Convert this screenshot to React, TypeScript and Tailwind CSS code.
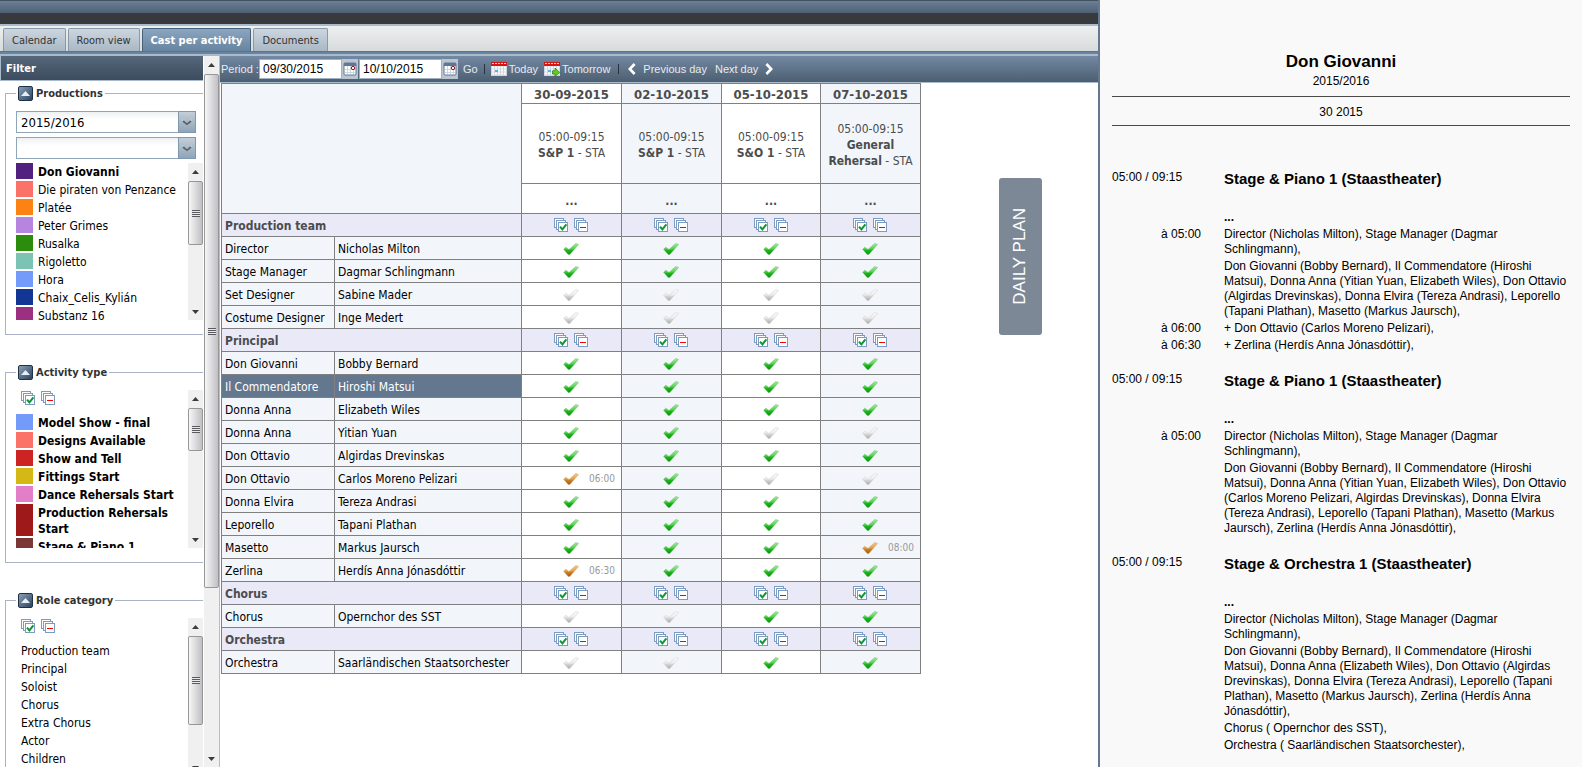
import { ReactNode } from "react";
import { clsx } from "clsx";

type Mark = "on" | "off" | "part";
type Cell = { mark: Mark; time?: string };
type Person = { role: string; name: string; cells: Cell[]; active?: boolean };
type Group = { title: string; people: Person[] };

const on: Cell = { mark: "on" };
const off: Cell = { mark: "off" };
const late = (time: string): Cell => ({ mark: "part", time });

const activities = [
  { date: "30-09-2015", hours: "05:00-09:15", name: "S&P 1", place: "STA" },
  { date: "02-10-2015", hours: "05:00-09:15", name: "S&P 1", place: "STA" },
  { date: "05-10-2015", hours: "05:00-09:15", name: "S&O 1", place: "STA" },
  {
    date: "07-10-2015",
    hours: "05:00-09:15",
    name: "General Rehersal",
    place: "STA",
  },
];

const groups: Group[] = [
  {
    title: "Production team",
    people: [
      { role: "Director", name: "Nicholas Milton", cells: [on, on, on, on] },
      { role: "Stage Manager", name: "Dagmar Schlingmann", cells: [on, on, on, on] },
      { role: "Set Designer", name: "Sabine Mader", cells: [off, off, off, off] },
      { role: "Costume Designer", name: "Inge Medert", cells: [off, off, off, off] },
    ],
  },
  {
    title: "Principal",
    people: [
      { role: "Don Giovanni", name: "Bobby Bernard", cells: [on, on, on, on] },
      { role: "Il Commendatore", name: "Hiroshi Matsui", cells: [on, on, on, on], active: true },
      { role: "Donna Anna", name: "Elizabeth Wiles", cells: [on, on, on, on] },
      { role: "Donna Anna", name: "Yitian Yuan", cells: [on, on, off, off] },
      { role: "Don Ottavio", name: "Algirdas Drevinskas", cells: [on, on, on, on] },
      { role: "Don Ottavio", name: "Carlos Moreno Pelizari", cells: [late("06:00"), on, off, off] },
      { role: "Donna Elvira", name: "Tereza Andrasi", cells: [on, on, on, on] },
      { role: "Leporello", name: "Tapani Plathan", cells: [on, on, on, on] },
      { role: "Masetto", name: "Markus Jaursch", cells: [on, on, on, late("08:00")] },
      { role: "Zerlina", name: "Herdís Anna Jónasdóttir", cells: [late("06:30"), on, on, on] },
    ],
  },
  {
    title: "Chorus",
    people: [{ role: "Chorus", name: "Opernchor des SST", cells: [off, off, on, on] }],
  },
  {
    title: "Orchestra",
    people: [
      { role: "Orchestra", name: "Saarländischen Staatsorchester", cells: [off, off, on, on] },
    ],
  },
];

const productions = [
  { name: "Don Giovanni", color: "bg-[#52207f]", bold: true },
  { name: "Die piraten von Penzance", color: "bg-[#fb7268]" },
  { name: "Platée", color: "bg-[#fb8213]" },
  { name: "Peter Grimes", color: "bg-[#b585e0]" },
  { name: "Rusalka", color: "bg-[#2c8d0c]" },
  { name: "Rigoletto", color: "bg-[#7cc3b4]" },
  { name: "Hora", color: "bg-[#759bfa]" },
  { name: "Chaix_Celis_Kylián", color: "bg-[#133593]" },
  { name: "Substanz 16", color: "bg-[#9c2f7f]" },
];

const activityTypes = [
  { name: "Model Show - final", color: "bg-[#759bfa]", bold: true },
  { name: "Designs Available", color: "bg-[#fb7268]", bold: true },
  { name: "Show and Tell", color: "bg-[#cd2323]", bold: true },
  { name: "Fittings Start", color: "bg-[#d5b816]", bold: true },
  { name: "Dance Rehersals Start", color: "bg-[#e37fc9]", bold: true },
  { name: "Production Rehersals Start", color: "bg-[#9e1919]", bold: true },
  { name: "Stage & Piano 1", color: "bg-[#7b3636]", bold: true },
];

const roles = [
  "Production team",
  "Principal",
  "Soloist",
  "Chorus",
  "Extra Chorus",
  "Actor",
  "Children",
];

const plan = [
  {
    hours: "05:00 / 09:15",
    title: "Stage & Piano 1 (Staastheater)",
    rows: [
      { at: "à 05:00", text: "Director (Nicholas Milton), Stage Manager (Dagmar Schlingmann)," },
      {
        text: "Don Giovanni (Bobby Bernard), Il Commendatore (Hiroshi Matsui), Donna Anna (Yitian Yuan, Elizabeth Wiles), Don Ottavio (Algirdas Drevinskas), Donna Elvira (Tereza Andrasi), Leporello (Tapani Plathan), Masetto (Markus Jaursch),",
      },
      { at: "à 06:00", text: "+ Don Ottavio (Carlos Moreno Pelizari)," },
      { at: "à 06:30", text: "+ Zerlina (Herdís Anna Jónasdóttir)," },
    ],
  },
  {
    hours: "05:00 / 09:15",
    title: "Stage & Piano 1 (Staastheater)",
    rows: [
      { at: "à 05:00", text: "Director (Nicholas Milton), Stage Manager (Dagmar Schlingmann)," },
      {
        text: "Don Giovanni (Bobby Bernard), Il Commendatore (Hiroshi Matsui), Donna Anna (Yitian Yuan, Elizabeth Wiles), Don Ottavio (Carlos Moreno Pelizari, Algirdas Drevinskas), Donna Elvira (Tereza Andrasi), Leporello (Tapani Plathan), Masetto (Markus Jaursch), Zerlina (Herdís Anna Jónasdóttir),",
      },
    ],
  },
  {
    hours: "05:00 / 09:15",
    title: "Stage & Orchestra 1 (Staastheater)",
    rows: [
      { text: "Director (Nicholas Milton), Stage Manager (Dagmar Schlingmann)," },
      {
        text: "Don Giovanni (Bobby Bernard), Il Commendatore (Hiroshi Matsui), Donna Anna (Elizabeth Wiles), Don Ottavio (Algirdas Drevinskas), Donna Elvira (Tereza Andrasi), Leporello (Tapani Plathan), Masetto (Markus Jaursch), Zerlina (Herdís Anna Jónasdóttir),",
      },
      { text: "Chorus ( Opernchor des SST)," },
      { text: "Orchestra ( Saarländischen Staatsorchester)," },
    ],
  },
];

const IconDefs = () => (
  <svg width="0" height="0" className="absolute" aria-hidden="true">
    <defs>
      <linearGradient id="mark-on" x1="0" y1="0" x2="0" y2="1">
        <stop offset="0" stopColor="#a9e8a2" />
        <stop offset="0.5" stopColor="#4fd04c" />
        <stop offset="0.6" stopColor="#1fb51f" />
        <stop offset="1" stopColor="#0c930c" />
      </linearGradient>
      <linearGradient id="mark-part" x1="0" y1="0" x2="0" y2="1">
        <stop offset="0" stopColor="#edcb94" />
        <stop offset="0.5" stopColor="#e3a14b" />
        <stop offset="0.6" stopColor="#cf8226" />
        <stop offset="1" stopColor="#9c5a0c" />
      </linearGradient>
      <linearGradient id="mark-off" x1="0" y1="0" x2="0" y2="1">
        <stop offset="0" stopColor="#fafafa" />
        <stop offset="0.5" stopColor="#ececec" />
        <stop offset="0.6" stopColor="#d6d6d6" />
        <stop offset="1" stopColor="#adadad" />
      </linearGradient>
    </defs>
  </svg>
);

const markStyles = {
  on: { fill: "url(#mark-on)", stroke: "#58b957" },
  part: { fill: "url(#mark-part)", stroke: "#c9975a" },
  off: { fill: "url(#mark-off)", stroke: "#c6c6c6" },
};

const MarkIcon = ({ mark }: { mark: Mark }) => (
  <svg width="16" height="12" viewBox="0 0 16 12">
    <path
      d="M0.6 6.3 L2.8 4.2 L6 6.4 L12.8 0.4 L15.6 1.4 L6.8 11.6 L5.2 11.6 Z"
      fill={markStyles[mark].fill}
      stroke={markStyles[mark].stroke}
      strokeWidth="0.4"
    />
  </svg>
);

const StackIcon = ({ kind }: { kind: "all" | "none" }) => (
  <svg width="14" height="14" viewBox="0 0 14 14">
    <g fill="#fff" stroke="#7b9cc0">
      <rect x="0.5" y="0.5" width="9" height="9" />
      <rect x="2.5" y="2.5" width="9" height="9" />
      <rect x="4.5" y="4.5" width="9" height="9" />
    </g>
    {kind === "all" ? (
      <path d="M6 8.6 L8.4 11.4 L12.4 6.4" fill="none" stroke="#0f9636" strokeWidth="2" />
    ) : (
      <rect x="6" y="9" width="6" height="1" fill="#f00" shapeRendering="crispEdges" />
    )}
  </svg>
);

const StackButtons = () => (
  <div className="flex gap-1.5">
    <button aria-label="Select all">
      <StackIcon kind="all" />
    </button>
    <button aria-label="Select none">
      <StackIcon kind="none" />
    </button>
  </div>
);

const PickerIcon = () => (
  <svg width="14" height="14" viewBox="0 0 14 14">
    <rect x="1" y="1" width="12" height="12" rx="1" fill="#fff" stroke="#5f7794" />
    <rect x="1" y="1" width="12" height="3" fill="#5f7794" />
    <path d="M2 7.5 H12 M2 10.5 H12 M4.5 4 V12 M7.5 4 V12 M10.5 4 V12" stroke="#cdd6df" />
    <circle cx="10" cy="6" r="1.7" fill="#fff" stroke="#8d1626" />
  </svg>
);

const DayIcon = ({ next }: { next?: boolean }) => (
  <svg width="16" height="15" viewBox="0 0 16 15">
    <rect x="0" y="3" width="16" height="11" fill="#cfd6dc" />
    <path
      d="M1 5.5 H15 M1 8.5 H15 M1 11.5 H15"
      stroke="#fff"
      strokeWidth="2"
      strokeDasharray="2 1"
    />
    <rect x="4" y="8" width="3" height="2" fill="#57b4e8" />
    <rect x="0" y="0" width="16" height="4" fill="#d31616" />
    <path d="M1 1.5 H15" stroke="#f7caca" strokeDasharray="2 1" />
    {next && (
      <path
        d="M8.5 8.8 H11 V6 L15.6 10.4 L11 14.6 V12 H8.5 Z"
        fill="#5fd01b"
        stroke="#257a0a"
        strokeWidth="0.7"
      />
    )}
  </svg>
);

const Chevron = ({ right }: { right?: boolean }) => (
  <svg width="8" height="12" viewBox="0 0 8 12">
    <path
      d={right ? "M1.4 1 L6.2 6 L1.4 11" : "M6.6 1 L1.8 6 L6.6 11"}
      fill="none"
      stroke="#fff"
      strokeWidth="2.6"
    />
  </svg>
);

const ScrollRail = ({ thumb, className }: { thumb: string; className?: string }) => (
  <div
    aria-hidden="true"
    className={clsx("flex w-[15px] shrink-0 flex-col items-center bg-[#f0f0f0]", className)}
  >
    <div className="flex h-[18px] shrink-0 items-center">
      <svg width="7" height="4" viewBox="0 0 7 4">
        <path d="M0 4 L3.5 0 L7 4 Z" fill="#3c3c3c" />
      </svg>
    </div>
    <div
      className={clsx(
        "flex w-full shrink-0 flex-col items-center justify-center rounded-xs border border-[#979797] bg-linear-to-r from-[#f6f6f6] via-[#dcdcdf] to-[#bfbfc4]",
        thumb
      )}
    >
      <svg width="8" height="9" viewBox="0 0 8 9">
        <path d="M0 1.5 H8 M0 3.5 H8 M0 5.5 H8 M0 7.5 H8" stroke="#5b5b5f" />
        <path d="M0 2.5 H8 M0 4.5 H8 M0 6.5 H8" stroke="#e8e8ea" />
      </svg>
    </div>
    <div className="mt-auto flex h-4 shrink-0 items-center">
      <svg width="7" height="4" viewBox="0 0 7 4">
        <path d="M0 0 L3.5 4 L7 0 Z" fill="#3c3c3c" />
      </svg>
    </div>
  </div>
);

const FilterBox = ({
  title,
  className,
  children,
}: {
  title: string;
  className: string;
  children: ReactNode;
}) => (
  <fieldset
    className={clsx("ml-[5px] min-w-0 shrink-0 border border-r-0 border-[#abb1c6] pl-2.5", className)}
  >
    <legend className="flex h-4 items-center gap-[3px] px-0.5 text-[11px] font-bold text-[#333]">
      <button
        aria-label={`Collapse ${title}`}
        className="flex size-[15px] items-center justify-center rounded-xs border border-[#1d3148] bg-linear-to-br from-[#8ba0b5] to-[#2c4560]"
      >
        <svg width="9" height="5" viewBox="0 0 9 5">
          <path d="M0 5 L4.5 0 L9 5 Z" fill="#e8eef4" />
        </svg>
      </button>
      <span className="pt-0.5">{title}</span>
    </legend>
    {children}
  </fieldset>
);

const ColorList = ({
  items,
}: {
  items: { name: string; color: string; bold?: boolean }[];
}) => (
  <ul className="flex flex-col gap-0.5">
    {items.map((item) => (
      <li key={item.name} className="flex shrink-0 gap-[5px] text-black">
        <span className={clsx("w-[17px] shrink-0", item.color)} />
        <span className={clsx("-mb-px pt-px leading-4", item.bold && "font-bold")}>
          {item.name}
        </span>
      </li>
    ))}
  </ul>
);

const Dropdown = ({ label, value }: { label: string; value: string }) => (
  <div className="relative h-[22px] w-[180px]">
    <select
      aria-label={label}
      defaultValue={value}
      className="h-full w-full appearance-none border border-[#8fa6ba] bg-linear-to-b from-[#eef1f2] to-white to-40% pt-0.5 pl-1 text-[13px] text-black"
    >
      <option value={value}>{value}</option>
    </select>
    <span className="pointer-events-none absolute inset-y-0 right-0 flex w-[18px] items-center justify-center border border-[#8098ad] bg-linear-to-b from-[#c3ced8] to-[#8fa5b8]">
      <svg width="10" height="7" viewBox="0 0 10 7">
        <path d="M0.5 1 L5 4.6 L9.5 1" fill="none" stroke="#f4f6f8" />
        <path d="M1 2 L5 5.2 L9 2" fill="none" stroke="#5a6068" strokeWidth="1.8" />
      </svg>
    </span>
  </div>
);

const Sidebar = () => (
  <aside className="flex w-[220px] shrink-0 overflow-hidden border-r border-[#b0bfcd] bg-white">
    <div className="flex w-[203px] shrink-0 flex-col">
      <h2 className="mb-1 flex h-[25px] shrink-0 items-center border-b border-l border-[#a9bacb] bg-linear-to-b from-[#55677a] to-[#3d4c5f] pt-0.5 pl-[5px] text-[11px] font-bold text-white">
        Filter
      </h2>
      <div className="flex flex-col gap-[29px]">
        <FilterBox title="Productions" className="h-[250px]">
          <div className="mt-2.5 flex flex-col gap-1">
            <Dropdown label="Season" value="2015/2016" />
            <Dropdown label="Production" value="" />
          </div>
          <div className="mt-1 flex h-[157px] justify-between overflow-hidden">
            <ColorList items={productions} />
            <ScrollRail thumb="h-16" />
          </div>
        </FilterBox>
        <FilterBox title="Activity type" className="h-[199px]">
          <div className="mt-2.5 flex h-[158px] justify-between overflow-hidden">
            <div>
              <div className="mt-px mb-[9px] pl-[5px]">
                <StackButtons />
              </div>
              <ColorList items={activityTypes} />
            </div>
            <ScrollRail thumb="h-[43px]" />
          </div>
        </FilterBox>
        <FilterBox title="Role category" className="h-[199px]">
          <div className="mt-2.5 flex h-[158px] justify-between overflow-hidden">
            <div className="pt-px pl-[5px]">
              <StackButtons />
              <ul className="mt-[9px] leading-[18px] text-black">
                {roles.map((role) => (
                  <li key={role}>{role}</li>
                ))}
              </ul>
            </div>
            <ScrollRail thumb="h-[89px]" />
          </div>
        </FilterBox>
      </div>
    </div>
    <ScrollRail thumb="h-[514px]" className="ml-px" />
  </aside>
);

const tabs = ["Calendar", "Room view", "Cast per activity", "Documents"];

const TabBar = () => (
  <nav className="flex h-[26px] shrink-0 items-end gap-0.5 border-b border-[#5b748b] bg-linear-to-b from-[#eef0f0] to-[#d7dbdb] pl-[3px] text-[11px]">
    {tabs.map((tab) => (
      <button
        key={tab}
        className={clsx(
          "h-[23px] rounded-t-xs border border-b-0 px-2 pt-0.5",
          tab === "Cast per activity"
            ? "border-[#46617c] bg-linear-to-b from-[#8ba5c0] to-[#6785a0] font-bold text-white"
            : "border-[#8999a8] bg-linear-to-b from-[#ccd6e0] to-[#aab8c4] text-[#333]"
        )}
      >
        {tab}
      </button>
    ))}
  </nav>
);

const DateField = ({ label, value }: { label: string; value: string }) => (
  <div className="flex h-5">
    <input
      type="text"
      aria-label={label}
      defaultValue={value}
      className="w-[83px] border border-[#9fb0c0] bg-white pl-[3px] text-xs text-black"
    />
    <button
      aria-label={`Pick ${label}`}
      className="flex w-4 items-center justify-center bg-[#b9c6d2]"
    >
      <PickerIcon />
    </button>
  </div>
);

const Toolbar = () => (
  <div className="flex h-[27px] shrink-0 items-center border-b border-[#a9bacb] bg-linear-to-b from-[#7389a3] to-[#4c5f71] pl-px font-['Liberation_Sans',sans-serif] text-[11px] whitespace-nowrap text-[#e6ebf0]">
    <span className="w-[38px]">Period :</span>
    <div className="flex gap-px">
      <DateField label="start date" value="09/30/2015" />
      <DateField label="end date" value="10/10/2015" />
    </div>
    <button className="ml-[5px]">Go</button>
    <span className="ml-1.5 h-2.5 w-px bg-[#28323c]" />
    <button className="ml-1.5 flex items-center gap-0.5">
      <DayIcon />
      Today
    </button>
    <button className="ml-1.5 flex items-center gap-0.5">
      <DayIcon next />
      Tomorrow
    </button>
    <span className="ml-2 h-2.5 w-px bg-[#28323c]" />
    <button className="ml-[9px] flex items-center gap-[7px]">
      <Chevron />
      Previous day
    </button>
    <button className="ml-2 flex items-center gap-[7px]">
      Next day
      <Chevron right />
    </button>
  </div>
);

const CastTable = () => (
  <table className="w-[700px] shrink-0 table-fixed border-collapse text-black [&_td]:border [&_td]:border-[#808080] [&_th]:border [&_th]:border-[#808080]">
    <colgroup>
      <col className="w-[113px]" />
      <col className="w-[187px]" />
      <col className="w-[100px]" />
      <col className="w-[100px]" />
      <col className="w-[99px]" />
      <col className="w-[100px]" />
    </colgroup>
    <thead className="text-center text-[#4c4c4c]">
      <tr className="h-5">
        <td colSpan={2} rowSpan={3} className="bg-[#f2f6fb]" />
        {activities.map((a) => (
          <th
            key={a.date}
            className="p-0 pt-0.5 text-[13px] leading-4 even:bg-white odd:bg-[#f2f6fb]"
          >
            {a.date}
          </th>
        ))}
      </tr>
      <tr className="h-20">
        {activities.map((a) => (
          <td key={a.date} className="p-0 pt-0.5 leading-4 even:bg-[#f2f6fb]">
            {a.hours}
            <br />
            <b>{a.name}</b> - {a.place}
          </td>
        ))}
      </tr>
      <tr className="h-[30px]">
        {activities.map((a) => (
          <td key={a.date} className="p-0 pt-1 font-bold even:bg-[#f2f6fb]">
            ...
          </td>
        ))}
      </tr>
    </thead>
    {groups.map((group) => (
      <tbody key={group.title}>
        <tr className="h-[23px] bg-[#eae9f8]">
          <th
            colSpan={2}
            className="pt-0.5 pr-0 pb-0 pl-[3px] text-left leading-4 text-[#4c4c4c]"
          >
            {group.title}
          </th>
          {activities.map((a) => (
            <td key={a.date} className="p-0">
              <div className="flex justify-center pr-px">
                <StackButtons />
              </div>
            </td>
          ))}
        </tr>
        {group.people.map((p) => (
          <tr key={p.role + p.name} className="h-[23px]">
            {[p.role, p.name].map((text, i) => (
              <td
                key={i}
                className={clsx(
                  "pt-0.5 pr-0 pb-0 pl-[3px] leading-4 whitespace-nowrap",
                  p.active ? "bg-[#63778f] text-white" : "bg-[#f2f6fb]"
                )}
              >
                {text}
              </td>
            ))}
            {p.cells.map((cell, i) => (
              <td key={i} className={clsx("p-0 pt-0.5", i % 2 && "bg-[#f2f6fb]")}>
                <div className="grid grid-cols-[41px_16px_1fr] items-center">
                  <button
                    aria-label={`${p.name} ${activities[i].date}`}
                    className="col-start-2"
                  >
                    <MarkIcon mark={cell.mark} />
                  </button>
                  {cell.time && (
                    <span className="pr-1.5 text-right text-[10px] leading-3 text-[#999]">
                      {cell.time}
                    </span>
                  )}
                </div>
              </td>
            ))}
          </tr>
        ))}
      </tbody>
    ))}
  </table>
);

const DailyPlan = () => (
  <section className="w-[484px] shrink-0 overflow-hidden border-l-2 border-[#65788f] bg-[#f9f9f9] pr-3 pl-3 font-['Liberation_Sans',sans-serif] text-xs text-black">
    <header className="pt-[52px] text-center leading-[15px]">
      <h1 className="text-[17px] leading-5 font-bold">Don Giovanni</h1>
      <p className="mt-0.5 mb-[7px]">2015/2016</p>
      <p className="border-y border-[#4a4a4a] pt-2 pb-1.5 leading-[14px]">30 2015</p>
    </header>
    <div className="mt-[26px]">
      {plan.map((item, i) => (
        <article key={i}>
          <div className="flex h-[57px] pt-[17px]">
            <span className="w-28 leading-[17px]">{item.hours}</span>
            <h2 className="text-[15px] leading-5 font-bold">{item.title}</h2>
          </div>
          <p className="h-[17px] pl-28 font-bold">...</p>
          {item.rows.map((row) => (
            <div key={row.text} className="flex py-px leading-[15px]">
              <span className="mr-[23px] w-[89px] shrink-0 text-right">{row.at}</span>
              <p>{row.text}</p>
            </div>
          ))}
        </article>
      ))}
    </div>
  </section>
);

const App = () => (
  <div className="flex h-screen overflow-hidden bg-white font-['DejaVu_Sans_Condensed','DejaVu_Sans',sans-serif] text-xs [font-stretch:condensed]">
    <IconDefs />
    <div className="flex min-w-0 flex-1 flex-col">
      <div className="h-[13px] shrink-0 border-t border-[#43525f] bg-linear-to-b from-[#6b7f97] to-[#4e6073]" />
      <div className="h-[11px] shrink-0 bg-[#38393d]" />
      <div className="h-0.5 shrink-0 bg-[#a9bacb]" />
      <TabBar />
      <div className="h-1 shrink-0 border-b-2 border-[#a9bacb] bg-[#6785a0]" />
      <div className="flex min-h-0 flex-1">
        <Sidebar />
        <main className="flex min-w-0 flex-1 flex-col">
          <Toolbar />
          <div className="flex items-start justify-between pl-px">
            <CastTable />
            <button className="mt-[95px] mr-14 flex h-[157px] w-[43px] items-center justify-center rounded-[3px] bg-[#7d8896] font-['Liberation_Sans',sans-serif] text-[17px] text-white">
              <span className="rotate-180 [writing-mode:vertical-rl]">DAILY PLAN</span>
            </button>
          </div>
        </main>
      </div>
    </div>
    <DailyPlan />
  </div>
);

export default App;
